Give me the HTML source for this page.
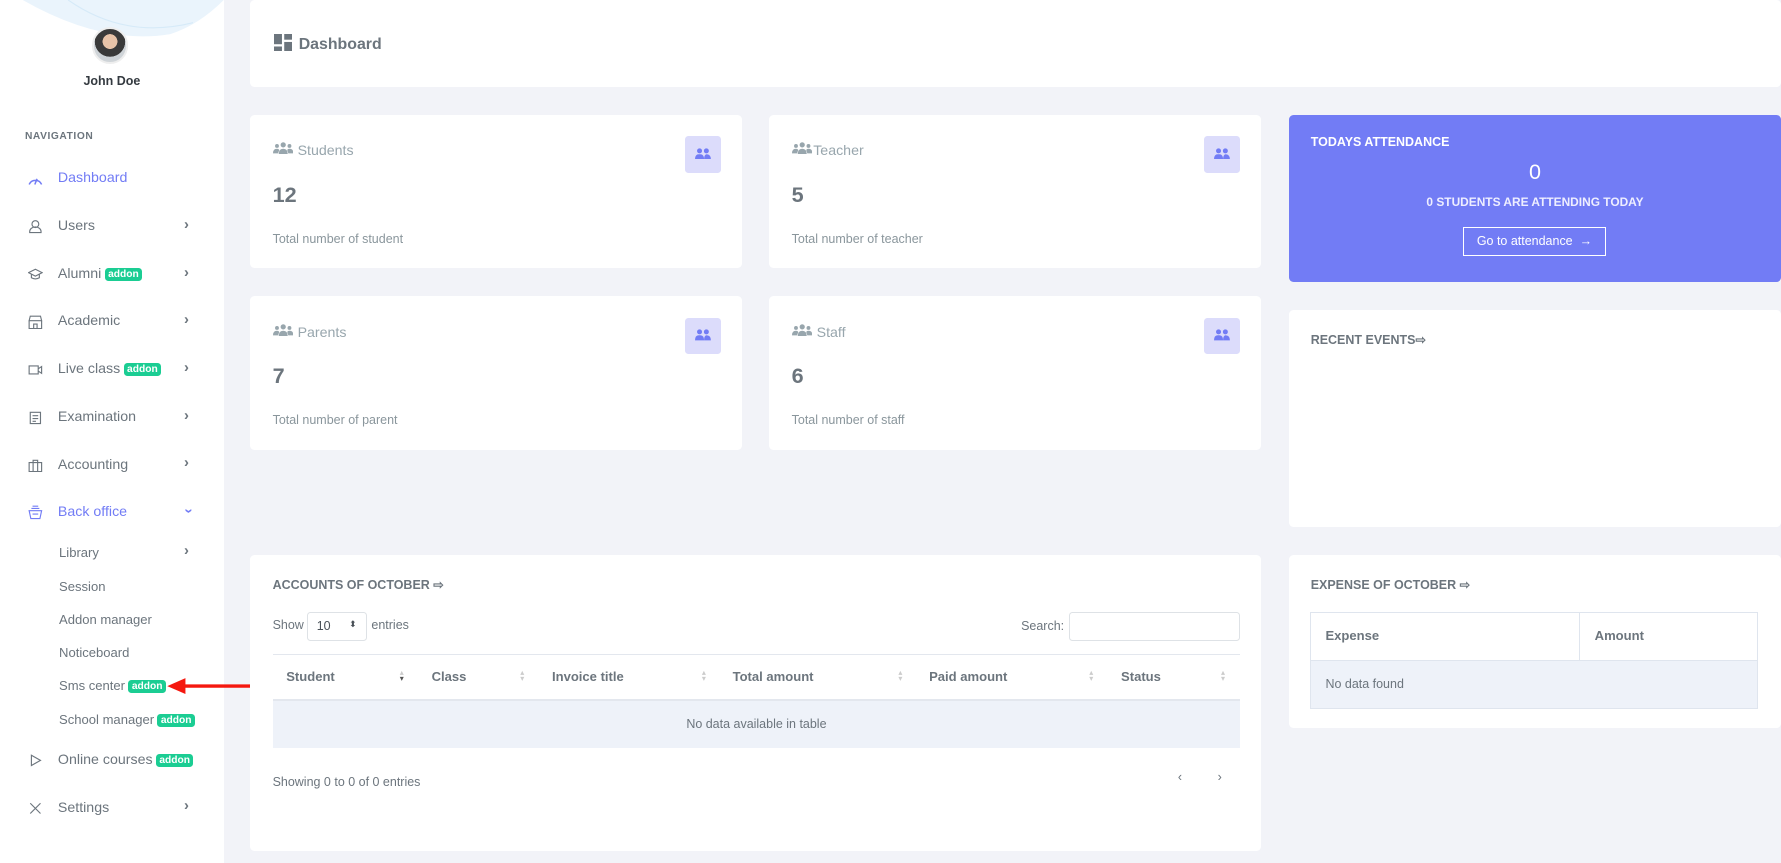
<!DOCTYPE html>
<html><head><meta charset="utf-8"><style>
html{zoom:1.1358}
*{box-sizing:border-box;margin:0;padding:0}
body{width:1568px;height:719px;overflow:hidden;background:#f2f3f8;font-family:"Liberation Sans",sans-serif;color:#6c757d;position:relative}
.abs{position:absolute}
.side{position:absolute;left:0;top:0;width:197px;height:760px;background:#fff}
.nav{position:absolute;left:51px;font-size:12.5px;color:#6c757d;white-space:nowrap}
.sub{position:absolute;left:52px;font-size:11.5px;color:#6c757d;white-space:nowrap}
.chev{position:absolute;left:162px;font-size:13px;font-weight:bold;color:#6c757d}
.badge{display:inline-block;background:#1bcd93;color:#fff;font-size:9px;font-weight:bold;border-radius:3px;padding:1px 3px;margin-left:3px;vertical-align:1px}
.ic{position:absolute;left:25px;width:13px;height:13px}
.card{position:absolute;background:#fff;border-radius:4px}
.lbl{position:absolute;font-size:12.5px;color:#98a6ad}
.num{position:absolute;font-size:19px;font-weight:bold;color:#6c757d}
.tot{position:absolute;font-size:11px;color:#8a969c}
.ibox{position:absolute;width:32px;height:32px;background:#dcdcfb;border-radius:3px}
.th{position:absolute;top:589px;font-size:11.5px;font-weight:bold;color:#6c757d}
.srt{position:absolute;top:590px;font-size:7px;color:#ccc;line-height:5px}
.pp{position:absolute;width:18px;height:11px}
</style></head><body>
<div class="side">
<svg class="abs" style="left:0;top:0" width="197" height="40"><path d="M20 0 Q90 40 150 30 Q175 22 197 0Z" fill="#eaf4fc"/><path d="M60 0 Q110 35 170 20" stroke="#d6eaf8" fill="none"/></svg>
<div class="abs" style="left:81px;top:24px;width:32px;height:32px;border-radius:50%;background:radial-gradient(circle at 50% 38%,#e8c3a8 0 28%,#3a3a3a 29% 58%,#cfd4d8 59%);border:2px solid #eee"></div>
<div class="abs" style="left:0;width:197px;top:65px;text-align:center;font-size:11px;font-weight:bold;color:#343a40">John Doe</div>
<div class="abs" style="left:22px;top:115px;font-size:9px;font-weight:bold;color:#6c757d;letter-spacing:.5px">NAVIGATION</div>
<svg class="ic" style="top:151px" viewBox="0 0 13 13"><path d="M1 11 A6 6 0 0 1 12 11M6 11 L8 6" stroke="#727cf5" stroke-width="1.3" fill="none"/></svg>
<div class="nav" style="top:150px;color:#727cf5">Dashboard</div>
<svg class="ic" style="top:193px" viewBox="0 0 13 13"><circle cx="6.5" cy="4.5" r="3" stroke="#6c757d" fill="none"/><path d="M1.5 12h10v-1a5 4 0 0 0-10 0z" stroke="#6c757d" fill="none"/></svg>
<div class="nav" style="top:192px">Users</div><div class="chev" style="top:191px">›</div>
<svg class="ic" style="top:235px" viewBox="0 0 13 13"><path d="M0.5 5 6.5 2 12.5 5 6.5 8z M3 6.5v3q3.5 2 7 0v-3" stroke="#6c757d" fill="none"/></svg>
<div class="nav" style="top:234px">Alumni<span class="badge">addon</span></div><div class="chev" style="top:233px">›</div>
<svg class="ic" style="top:277px" viewBox="0 0 13 13"><path d="M1 5h11v7H1zM2 1h9l1 4H1zM5 12V8h3v4" stroke="#6c757d" fill="none"/></svg>
<div class="nav" style="top:276px">Academic</div><div class="chev" style="top:275px">›</div>
<svg class="ic" style="top:319px" viewBox="0 0 13 13"><path d="M1 3.5h8v7H1zM9 6l3-2v6l-3-2" stroke="#6c757d" fill="none"/></svg>
<div class="nav" style="top:318px">Live class<span class="badge">addon</span></div><div class="chev" style="top:317px">›</div>
<svg class="ic" style="top:361px" viewBox="0 0 13 13"><path d="M2 2h9v10H2zM4 5h5M4 7.5h5M4 10h3" stroke="#6c757d" fill="none"/></svg>
<div class="nav" style="top:360px">Examination</div><div class="chev" style="top:359px">›</div>
<svg class="ic" style="top:403px" viewBox="0 0 13 13"><path d="M1 4h11v8H1zM4.5 4V2h4v2M4.5 4v8M8.5 4v8" stroke="#6c757d" fill="none"/></svg>
<div class="nav" style="top:402px">Accounting</div><div class="chev" style="top:401px">›</div>
<svg class="ic" style="top:445px" viewBox="0 0 13 13"><path d="M1 5h11l-1.5 7h-8zM3 3h7M4 1h5M4 8h5" stroke="#727cf5" fill="none"/></svg>
<div class="nav" style="top:444px;color:#727cf5">Back office</div><div class="chev" style="top:443px;color:#727cf5;transform:rotate(90deg);left:164px">›</div>
<div class="sub" style="top:480px">Library</div><div class="chev" style="top:478px">›</div>
<div class="sub" style="top:510px">Session</div>
<div class="sub" style="top:539px">Addon manager</div>
<div class="sub" style="top:568px">Noticeboard</div>
<div class="sub" style="top:597px">Sms center<span class="badge">addon</span></div>
<div class="sub" style="top:627px">School manager<span class="badge">addon</span></div>
<svg class="ic" style="top:663px" viewBox="0 0 13 13"><path d="M3 2l8 4.5-8 4.5z" stroke="#6c757d" fill="none"/></svg>
<div class="nav" style="top:662px">Online courses<span class="badge">addon</span></div>
<svg class="ic" style="top:705px" viewBox="0 0 13 13"><path d="M2 2l9 9M11 2 2 11" stroke="#6c757d" fill="none"/></svg>
<div class="nav" style="top:704px">Settings</div><div class="chev" style="top:703px">›</div>
</div>
<svg class="abs" style="left:145px;top:596px" width="80" height="16"><path d="M78 8H14" stroke="#f5180f" stroke-width="3"/><path d="M2 8 18 1v14z" fill="#f5180f"/></svg>

<div class="card" style="left:220px;top:0;width:1348px;height:77px"></div>
<svg class="abs" style="left:241px;top:30px" width="16" height="15"><rect x="0" y="0" width="7" height="9" fill="#6c757d"/><rect x="9" y="0" width="7" height="5" fill="#6c757d"/><rect x="0" y="11" width="7" height="4" fill="#6c757d"/><rect x="9" y="7" width="7" height="8" fill="#6c757d"/></svg>
<div class="abs" style="left:263px;top:32px;font-size:14px;font-weight:bold;color:#6c757d">Dashboard</div>

<div class="card" style="left:220px;top:101px;width:433px;height:135px"></div>
<div class="card" style="left:677px;top:101px;width:433px;height:135px"></div>
<div class="card" style="left:220px;top:261px;width:433px;height:135px"></div>
<div class="card" style="left:677px;top:261px;width:433px;height:135px"></div>
<svg class="pp" style="left:240px;top:125px" viewBox="0 0 18 11"><g fill="#98a6ad"><circle cx="9" cy="2.5" r="2.3"/><circle cx="3.5" cy="3.5" r="1.7"/><circle cx="14.5" cy="3.5" r="1.7"/><path d="M5 11q0-5 4-5t4 5zM0 10q0-4 3.5-4q1.5 0 2 1l-1 3zM18 10q0-4-3.5-4q-1.5 0-2 1l1 3z"/></g></svg>
<svg class="pp" style="left:697px;top:125px" viewBox="0 0 18 11"><g fill="#98a6ad"><circle cx="9" cy="2.5" r="2.3"/><circle cx="3.5" cy="3.5" r="1.7"/><circle cx="14.5" cy="3.5" r="1.7"/><path d="M5 11q0-5 4-5t4 5zM0 10q0-4 3.5-4q1.5 0 2 1l-1 3zM18 10q0-4-3.5-4q-1.5 0-2 1l1 3z"/></g></svg>
<svg class="pp" style="left:240px;top:285px" viewBox="0 0 18 11"><g fill="#98a6ad"><circle cx="9" cy="2.5" r="2.3"/><circle cx="3.5" cy="3.5" r="1.7"/><circle cx="14.5" cy="3.5" r="1.7"/><path d="M5 11q0-5 4-5t4 5zM0 10q0-4 3.5-4q1.5 0 2 1l-1 3zM18 10q0-4-3.5-4q-1.5 0-2 1l1 3z"/></g></svg>
<svg class="pp" style="left:697px;top:285px" viewBox="0 0 18 11"><g fill="#98a6ad"><circle cx="9" cy="2.5" r="2.3"/><circle cx="3.5" cy="3.5" r="1.7"/><circle cx="14.5" cy="3.5" r="1.7"/><path d="M5 11q0-5 4-5t4 5zM0 10q0-4 3.5-4q1.5 0 2 1l-1 3zM18 10q0-4-3.5-4q-1.5 0-2 1l1 3z"/></g></svg>
<div class="lbl" style="left:262px;top:126px">Students</div><div class="num" style="left:240px;top:160px">12</div><div class="tot" style="left:240px;top:204px">Total number of student</div>
<div class="lbl" style="left:716px;top:126px">Teacher</div><div class="num" style="left:697px;top:160px">5</div><div class="tot" style="left:697px;top:204px">Total number of teacher</div>
<div class="lbl" style="left:262px;top:286px">Parents</div><div class="num" style="left:240px;top:320px">7</div><div class="tot" style="left:240px;top:364px">Total number of parent</div>
<div class="lbl" style="left:719px;top:286px">Staff</div><div class="num" style="left:697px;top:320px">6</div><div class="tot" style="left:697px;top:364px">Total number of staff</div>
<div class="ibox" style="left:603px;top:120px"></div><div class="ibox" style="left:1060px;top:120px"></div>
<div class="ibox" style="left:603px;top:280px"></div><div class="ibox" style="left:1060px;top:280px"></div>
<svg class="abs" style="left:612px;top:130px" width="14" height="10"><circle cx="4" cy="2.5" r="2.2" fill="#727cf5"/><circle cx="10" cy="2.5" r="2.2" fill="#727cf5"/><path d="M0 10Q0 5 4 5.5Q8 5 8 10zM8 10q0-4 2-4.5q4 0 4 4.5z" fill="#727cf5"/></svg>
<svg class="abs" style="left:1069px;top:130px" width="14" height="10"><circle cx="4" cy="2.5" r="2.2" fill="#727cf5"/><circle cx="10" cy="2.5" r="2.2" fill="#727cf5"/><path d="M0 10Q0 5 4 5.5Q8 5 8 10zM8 10q0-4 2-4.5q4 0 4 4.5z" fill="#727cf5"/></svg>
<svg class="abs" style="left:612px;top:290px" width="14" height="10"><circle cx="4" cy="2.5" r="2.2" fill="#727cf5"/><circle cx="10" cy="2.5" r="2.2" fill="#727cf5"/><path d="M0 10Q0 5 4 5.5Q8 5 8 10zM8 10q0-4 2-4.5q4 0 4 4.5z" fill="#727cf5"/></svg>
<svg class="abs" style="left:1069px;top:290px" width="14" height="10"><circle cx="4" cy="2.5" r="2.2" fill="#727cf5"/><circle cx="10" cy="2.5" r="2.2" fill="#727cf5"/><path d="M0 10Q0 5 4 5.5Q8 5 8 10zM8 10q0-4 2-4.5q4 0 4 4.5z" fill="#727cf5"/></svg>

<div class="card" style="left:1135px;top:101px;width:433px;height:147px;background:#727cf5"></div>
<div class="abs" style="left:1154px;top:119px;font-size:11px;font-weight:bold;color:#fff">TODAYS ATTENDANCE</div>
<div class="abs" style="left:1135px;width:433px;top:140px;text-align:center;font-size:19px;color:#fff">0</div>
<div class="abs" style="left:1135px;width:433px;top:172px;text-align:center;font-size:10.5px;font-weight:bold;color:#eef">0 STUDENTS ARE ATTENDING TODAY</div>
<div class="abs" style="left:1288px;top:200px;width:126px;height:25px;border:1px solid #fff;color:#fff;font-size:11px;text-align:center;line-height:23px">Go to attendance &nbsp;→</div>

<div class="card" style="left:1135px;top:273px;width:433px;height:191px"></div>
<div class="abs" style="left:1154px;top:292px;font-size:11px;font-weight:bold;color:#6c757d">RECENT EVENTS⇨</div>

<div class="card" style="left:220px;top:489px;width:890px;height:260px"></div>
<div class="abs" style="left:240px;top:508px;font-size:11px;font-weight:bold;color:#6c757d">ACCOUNTS OF OCTOBER ⇨</div>
<div class="abs" style="left:240px;top:544px;font-size:11px">Show</div>
<div class="abs" style="left:270px;top:539px;width:53px;height:25px;border:1px solid #dee2e6;border-radius:3px;font-size:11px;padding:5px 8px;color:#495057">10 <span style="float:right;font-size:8px">⬍</span></div>
<div class="abs" style="left:327px;top:544px;font-size:11px">entries</div>
<div class="abs" style="left:899px;top:545px;font-size:11px">Search:</div>
<div class="abs" style="left:941px;top:539px;width:151px;height:25px;border:1px solid #dee2e6;border-radius:3px"></div>
<div class="abs" style="left:240px;top:576px;width:852px;height:1px;background:#e3e7ee"></div>
<div class="th" style="left:252px">Student</div><div class="srt" style="left:352px">▴<br><span style="color:#555">▾</span></div>
<div class="th" style="left:380px">Class</div><div class="srt" style="left:458px">▴<br>▾</div>
<div class="th" style="left:486px">Invoice title</div><div class="srt" style="left:618px">▴<br>▾</div>
<div class="th" style="left:645px">Total amount</div><div class="srt" style="left:791px">▴<br>▾</div>
<div class="th" style="left:818px">Paid amount</div><div class="srt" style="left:959px">▴<br>▾</div>
<div class="th" style="left:987px">Status</div><div class="srt" style="left:1075px">▴<br>▾</div>
<div class="abs" style="left:240px;top:615px;width:852px;height:44px;background:#eef2f9;border-top:2px solid #e3e7ee;text-align:center;font-size:11px;line-height:42px">No data available in table</div>
<div class="abs" style="left:240px;top:682px;font-size:11px">Showing 0 to 0 of 0 entries</div>
<div class="abs" style="left:1037px;top:678px;font-size:11px">‹</div><div class="abs" style="left:1072px;top:678px;font-size:11px">›</div>

<div class="card" style="left:1135px;top:489px;width:433px;height:152px"></div>
<div class="abs" style="left:1154px;top:508px;font-size:11px;font-weight:bold;color:#6c757d">EXPENSE OF OCTOBER ⇨</div>
<div class="abs" style="left:1153px;top:539px;width:395px;height:85px;border:1px solid #dfe5ee"></div>
<div class="abs" style="left:1390px;top:539px;width:1px;height:42px;background:#dfe5ee"></div>
<div class="abs" style="left:1167px;top:553px;font-size:11.5px;font-weight:bold">Expense</div>
<div class="abs" style="left:1404px;top:553px;font-size:11.5px;font-weight:bold">Amount</div>
<div class="abs" style="left:1154px;top:581px;width:393px;height:42px;background:#eef2f9;border-top:1px solid #dfe5ee;font-size:11px;padding:14px 13px">No data found</div>
</body></html>
